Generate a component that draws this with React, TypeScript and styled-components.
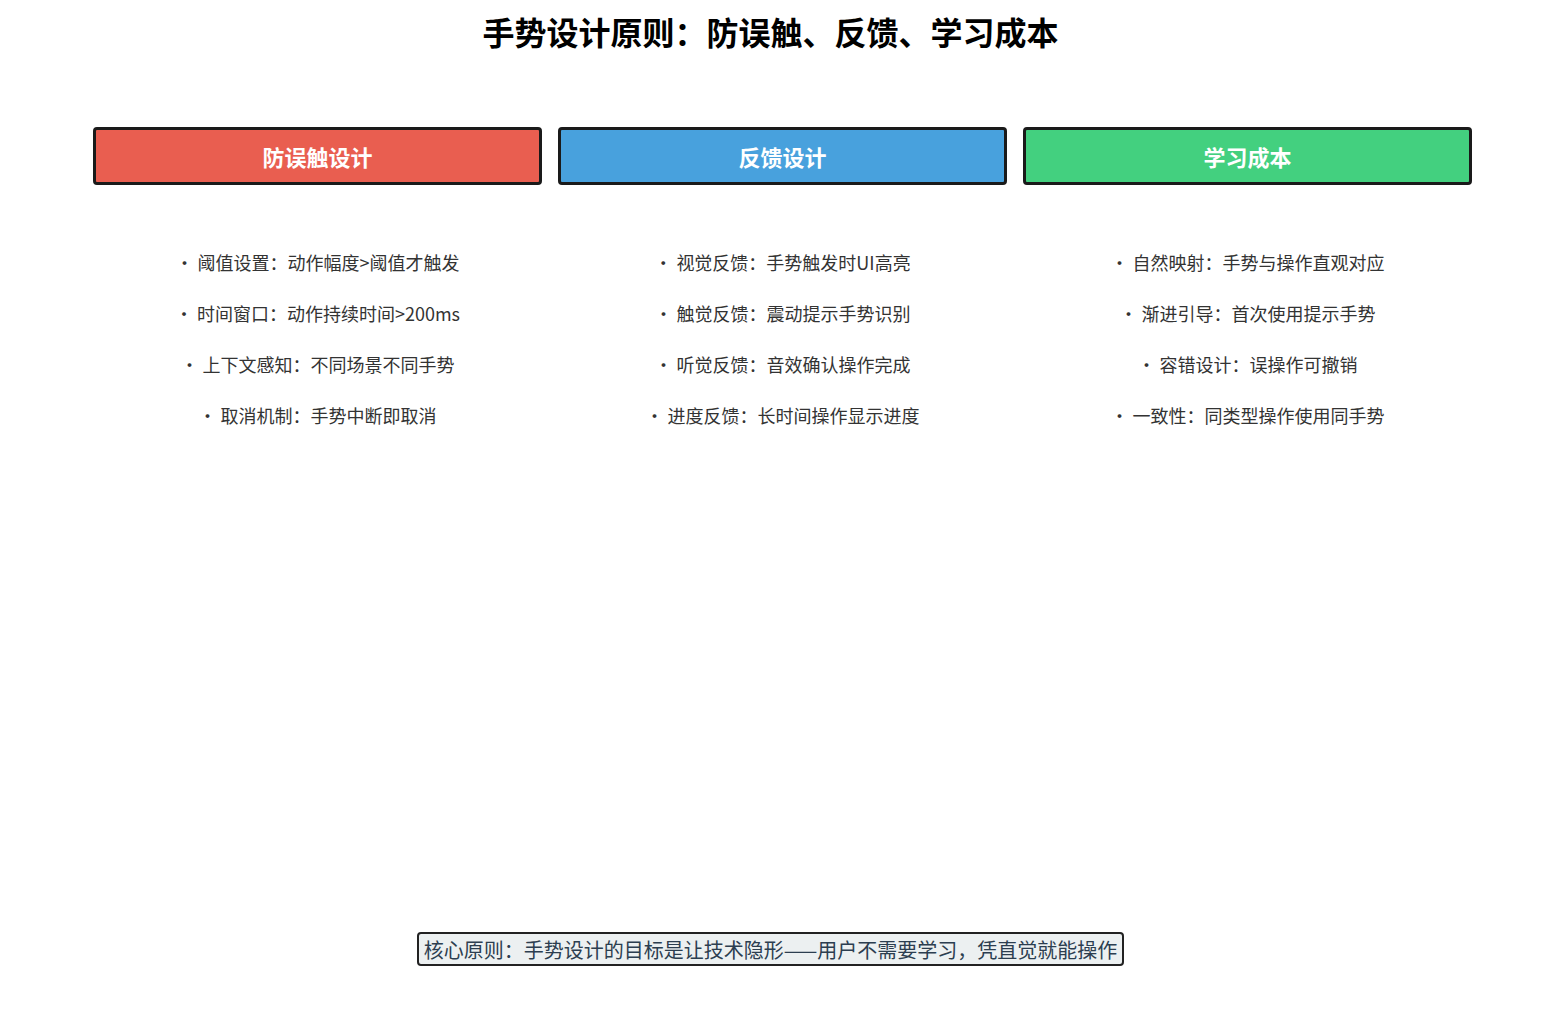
import React from "react";
import styled, { createGlobalStyle } from "styled-components";

const Global = createGlobalStyle`
  html, body { margin: 0; padding: 0; background: #fff; }
  body { font-family: "Noto Sans CJK SC", "Noto Sans", sans-serif; }
`;

const Page = styled.div`
  width: 1541px; height: 1021px; display: flex; flex-direction: column; align-items: center;
`;
const Title = styled.h1`
  margin: 9px 0 0; font-size: 32px; line-height: 44px; font-weight: 700; color: #000;
`;
const Columns = styled.div`
  align-self: stretch; margin: 74px 70px 0 93px;
  display: grid; grid-template-columns: repeat(3, 449px); column-gap: 16px;
`;
const Col = styled.div`display: flex; flex-direction: column; align-items: center;`;
const Header = styled.div<{ $bg: string }>`
  width: 100%; box-sizing: border-box; height: 58px; background: ${p => p.$bg};
  border: 3px solid #1a1a1a; border-radius: 4px; display: flex; align-items: center; justify-content: center;
  color: #fff; font-size: 22px; font-weight: 700;
`;
const List = styled.div`
  margin-top: 62px; display: flex; flex-direction: column; align-items: center; gap: 21px;
`;
const Item = styled.div`
  font-size: 18px; line-height: 30px; color: #333; white-space: nowrap;
`;
const Footer = styled.div`
  margin-top: auto; margin-bottom: 55px; background: #ecf0f1; border: 2px solid #222; border-radius: 4px;
  padding: 0 5px; height: 34px; box-sizing: border-box; display: flex; align-items: center;
  font-size: 20px; color: #2c3e50; white-space: nowrap;
`;

const cols = [
  { t: "防误触设计", c: "#e95e50", items: ["阈值设置：动作幅度>阈值才触发", "时间窗口：动作持续时间>200ms", "上下文感知：不同场景不同手势", "取消机制：手势中断即取消"] },
  { t: "反馈设计", c: "#48a1dd", items: ["视觉反馈：手势触发时UI高亮", "触觉反馈：震动提示手势识别", "听觉反馈：音效确认操作完成", "进度反馈：长时间操作显示进度"] },
  { t: "学习成本", c: "#43d07f", items: ["自然映射：手势与操作直观对应", "渐进引导：首次使用提示手势", "容错设计：误操作可撤销", "一致性：同类型操作使用同手势"] },
];

export default function App() {
  return (
    <Page>
      <Global />
      <Title>手势设计原则：防误触、反馈、学习成本</Title>
      <Columns>
        {cols.map(c => (
          <Col key={c.t}>
            <Header $bg={c.c}>{c.t}</Header>
            <List>{c.items.map(i => <Item key={i}>· {i}</Item>)}</List>
          </Col>
        ))}
      </Columns>
      <Footer>核心原则：手势设计的目标是让技术隐形——用户不需要学习，凭直觉就能操作</Footer>
    </Page>
  );
}
